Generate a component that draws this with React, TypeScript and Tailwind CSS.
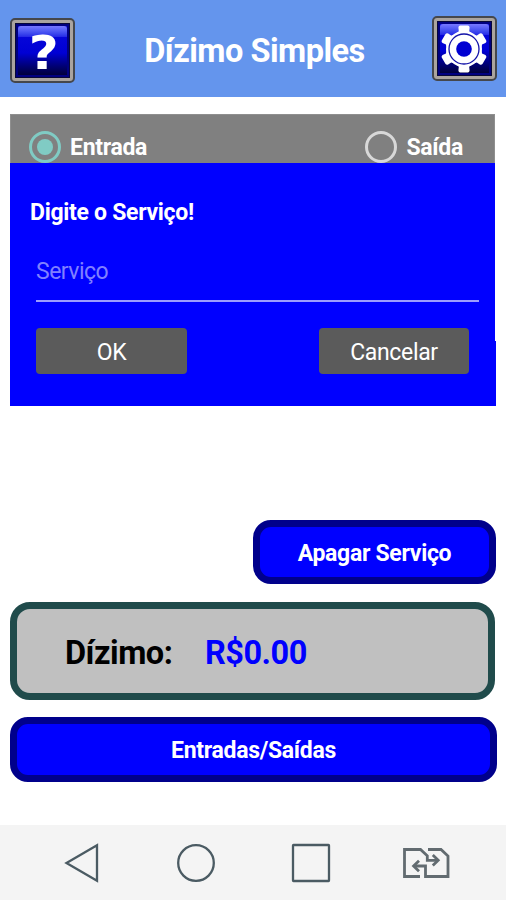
import { ReactNode } from "react";

function IconTile({ label, children }: { label: string; children: ReactNode }) {
  return (
    <button
      aria-label={label}
      className="h-[65px] w-[65px] shrink-0 rounded-[5px] border-2 border-[#45474c] bg-[#aaa49f] p-[3px]"
    >
      <div className="h-full w-full border border-[#080838] bg-[#000080] p-[2px]">
        <div className="relative h-full w-full bg-linear-to-b from-[#0909dc] via-[#0000d4] via-55% to-[#00003c]">
          {/* gloss on the upper part of the tile */}
          <div className="h-[11px] rounded-t-[3px] bg-linear-to-b from-[#7878ff] to-[#2525e6]" />
          <div className="absolute inset-0 flex items-center justify-center">{children}</div>
        </div>
      </div>
    </button>
  );
}

function GearIcon() {
  return (
    <svg viewBox="-24 -24 48 48" className="h-12 w-12 shrink-0">
      {[0, 60, 120, 180, 240, 300].map((deg) => (
        <path
          key={deg}
          d="M-9 -14 L-5.2 -17.8 L-5.6 -21.5 Q-5.4 -23.3 -3.8 -23.5 H3.8 Q5.4 -23.3 5.6 -21.5 L5.2 -17.8 L9 -14 Z"
          fill="#fff"
          transform={`rotate(${deg})`}
        />
      ))}
      <circle r="18" fill="#fff" />
      <circle r="15" fill="none" stroke="#1212a8" strokeWidth="1.3" />
      <circle r="7.8" fill="#0000d2" />
    </svg>
  );
}

function Header() {
  return (
    <header className="flex h-[97px] items-start justify-between bg-[#6495ed] pl-[10px] pr-[9px]">
      <div className="mt-[18px]">
        <IconTile label="Ajuda">
          <span className="inline-block scale-x-110 pl-[2px] pt-[4px] font-['DejaVu_Sans',sans-serif] text-[47px] font-bold leading-none text-white">
            ?
          </span>
        </IconTile>
      </div>
      <h1 className="mt-[32px] whitespace-nowrap pl-[2px] text-[32.5px] font-bold leading-[39px] tracking-[-0.5px] text-white">
        Dízimo Simples
      </h1>
      <div className="mt-[16px]">
        <IconTile label="Configurações">
          <GearIcon />
        </IconTile>
      </div>
    </header>
  );
}

function Radio({ label, checked = false }: { label: string; checked?: boolean }) {
  return (
    <label className="flex items-center gap-[9px]">
      <span
        className={`flex h-8 w-8 items-center justify-center rounded-full border-[3px] ${
          checked ? "border-[#80cbc4]" : "border-[#d8d8d8]"
        }`}
      >
        {checked && <span className="h-4 w-4 rounded-full bg-[#80cbc4]" />}
      </span>
      <span className="pt-[2px] text-[23px] font-bold leading-[30px] tracking-[-0.3px] text-white">{label}</span>
    </label>
  );
}

function ServiceForm() {
  return (
    <section className="ml-[10px] mr-[11px] mt-[17px] h-[292px] bg-[#0000ff]">
      <div className="flex h-[49px] items-end justify-between border border-b-0 border-[#8f8f8f] bg-[#808080] pl-[18px] pr-[31px]">
        <Radio label="Entrada" checked />
        <Radio label="Saída" />
      </div>
      <div className="flex flex-col">
        <h2 className="ml-[20px] mt-[33px] text-[23px] font-bold leading-[34px] tracking-[-0.3px] text-white">
          Digite o Serviço!
        </h2>
        <div className="ml-[26px] mr-[16px] mt-[23px] h-[49px] border-b-2 border-[#9c9cff]">
          <span className="text-[23px] leading-[38px] tracking-[-0.5px] text-[#8080ff]">Serviço</span>
        </div>
        <div className="ml-[26px] mr-[26px] mt-[26px] flex justify-between text-[23px] tracking-[-0.35px] text-white">
          <button className="h-[46px] w-[151px] rounded-[4px] bg-[#5b5b5b] pt-[4px]">OK</button>
          <button className="h-[46px] w-[150px] rounded-[4px] bg-[#5b5b5b] pt-[4px]">Cancelar</button>
        </div>
        {/* the lower part of the panel runs one pixel wider */}
        <div className="-mr-px -mt-[33px] ml-auto h-[65px] w-px bg-[#0000ff]" />
      </div>
    </section>
  );
}

function NavBar() {
  return (
    <nav className="mt-auto h-[75px] bg-[#f4f4f4]">
      <svg viewBox="0 825 506 75" className="h-[75px] w-[506px]" fill="none" stroke="#4b5b63" strokeWidth="2.3">
        <path d="M66.5 863 L97 845.3 V880.7 Z" />
        <circle cx="196" cy="863" r="17.8" />
        <rect x="293" y="845" width="36" height="36" rx="0.5" />
        <g stroke="#626b70" strokeWidth="2.8">
          <path d="M420 876.5 H404.5 V849.5 H420.5 L427.3 855.8 V860.3 H438" />
          <path d="M432.8 855 L438.2 860.2 L432.8 865.4" />
          <path d="M428 849.5 H441 L448 856 V876.5 H425.5 V866 H414" />
          <path d="M419 860.8 L413.6 866 L419 871.2" />
        </g>
      </svg>
    </nav>
  );
}

export default function App() {
  return (
    <div className="flex h-[900px] w-[506px] flex-col overflow-hidden bg-white font-[Roboto,sans-serif]">
      <Header />
      <ServiceForm />

      <button className="ml-auto mr-[10px] mt-[114px] h-[64px] w-[243px] rounded-[18px] border-[7px] border-[#00008b] bg-[#0000ff] pt-[4px] text-[23px] font-bold tracking-[-0.3px] text-white">
        Apagar Serviço
      </button>

      <div className="ml-[10px] mr-[11px] mt-[18px] flex h-[98px] items-center rounded-[20px] border-[7px] border-[#204b4b] bg-[#c0c0c0] pl-[48px] pt-[4px] text-[32.5px] font-bold tracking-[-0.5px]">
        <span className="w-[140px] text-black">Dízimo:</span>
        <span className="text-[#0000ff]">R$0.00</span>
      </div>

      <button className="ml-[10px] mr-[9px] mt-[17px] h-[65px] rounded-[18px] border-[7px] border-[#00008b] bg-[#0000ff] pt-[3px] text-[23px] font-bold tracking-[-0.3px] text-white">
        Entradas/Saídas
      </button>

      <NavBar />
    </div>
  );
}
